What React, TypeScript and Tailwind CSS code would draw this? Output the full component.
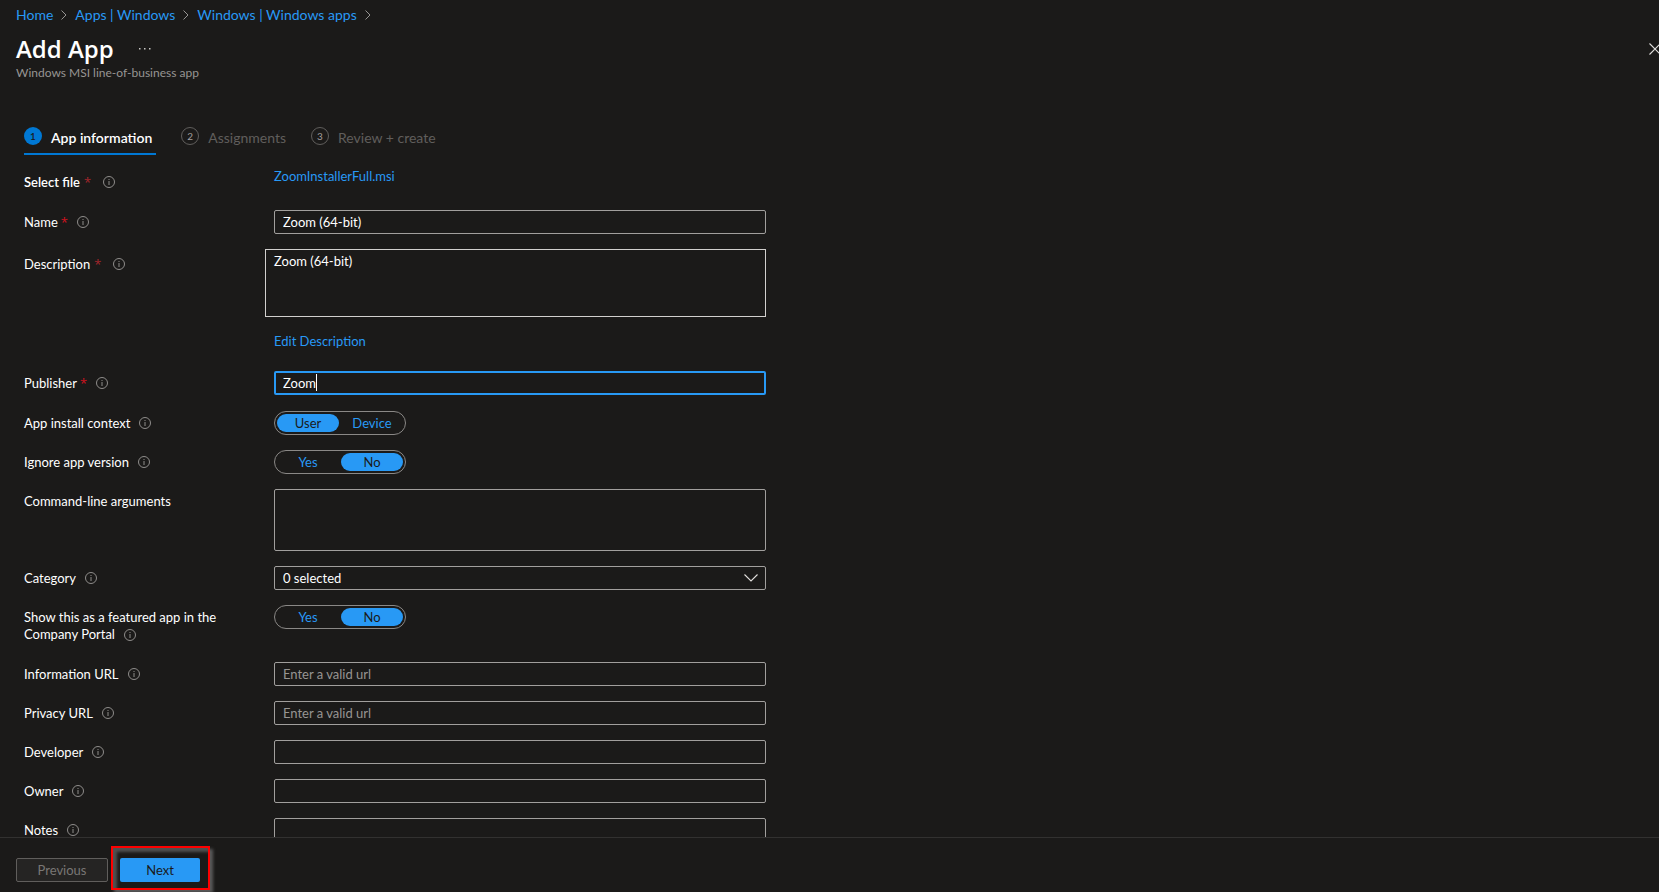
import React from "react";

const inputClass =
  "block h-6 w-full rounded-[2px] border border-[#a19f9d] bg-transparent px-2 text-[13px] leading-[18px] text-white outline-none placeholder:text-[#979593]";

function InfoIcon() {
  return (
    <svg width="12" height="12" viewBox="0 0 12 12" fill="none" className="shrink-0" aria-hidden="true">
      <circle cx="6" cy="6" r="5.5" stroke="#8f8d8b" />
      <path d="M6 5v4M6 3v1" stroke="#8f8d8b" strokeWidth="1" />
    </svg>
  );
}

function Chevron() {
  return (
    <svg width="6" height="10" viewBox="0 0 6 10" fill="none" aria-hidden="true">
      <path d="M0.5 0.5L5 5L0.5 9.5" stroke="#979593" />
    </svg>
  );
}

type RowProps = {
  label: string;
  htmlFor?: string;
  required?: boolean;
  info?: boolean;
  children: React.ReactNode;
};

function Row({ label, htmlFor, required, info = true, children }: RowProps) {
  return (
    <div className="flex items-start">
      <div className="flex min-h-6 w-[250px] shrink-0 items-center">
        <label htmlFor={htmlFor}>{label}</label>
        {required && <span className="ml-[3px] font-['Open_Sans',sans-serif] text-[#d0121f]">*</span>}
        {info && (
          <span className="ml-[9px]">
            <InfoIcon />
          </span>
        )}
      </div>
      <div className="w-full max-w-[492px]">{children}</div>
    </div>
  );
}

function Toggle({ name, options, selected }: { name: string; options: string[]; selected: string }) {
  return (
    <div role="radiogroup" aria-label={name} className="inline-flex h-6 gap-[2px] rounded-full border border-[#8a8886] p-[2px] align-top">
      {options.map((o) => (
        <label
          key={o}
          className="relative flex w-[62px] cursor-pointer items-center justify-center rounded-full text-[13px] leading-[18px] text-[#2899f5] has-checked:bg-[#2899f5] has-checked:text-[#1b1a19]"
        >
          <input type="radio" name={name} defaultChecked={o === selected} className="sr-only" />
          {o}
        </label>
      ))}
    </div>
  );
}

export default function App() {
  return (
    <div className="flex h-screen flex-col overflow-hidden bg-[#1b1a19] font-['Lato','Open_Sans',sans-serif] text-[13px] leading-[18px] text-white">
      <header className="px-4">
        <nav aria-label="Breadcrumb" className="flex h-[30px] items-center gap-2 text-sm text-[#2899f5]">
          <a href="#home">Home</a>
          <Chevron />
          <a href="#apps">Apps | Windows</a>
          <Chevron />
          <a href="#windows">Windows | Windows apps</a>
          <Chevron />
        </nav>
        <div className="flex h-[37px] items-center">
          <h1 className="font-['Open_Sans',sans-serif] text-2xl font-semibold">Add App</h1>
          <button type="button" aria-label="More actions" className="ml-6">
            <svg width="14" height="4" viewBox="0 0 14 4" fill="#c8c6c4" aria-hidden="true">
              <path d="M1 1h1.5v1.5H1zM6 1h1.5v1.5H6zM11 1h1.5v1.5H11z" />
            </svg>
          </button>
          <button type="button" aria-label="Close" className="-mr-4 ml-auto overflow-hidden">
            <svg width="10" height="12" viewBox="0 0 10 12" fill="none" aria-hidden="true">
              <path d="M0.5 0.5L11.5 11.5M0.5 11.5L11.5 0.5" stroke="#e1dfdd" strokeWidth="1.1" />
            </svg>
          </button>
        </div>
        <p className="text-xs leading-3 text-[#979593]">Windows MSI line-of-business app</p>
      </header>

      <main className="min-h-0 flex-1 overflow-y-auto px-6 pt-12 [scrollbar-width:none]">
        <div role="tablist" className="flex gap-[25px] text-sm leading-[18px]">
          <button type="button" role="tab" aria-selected="true" className="flex h-7 items-start gap-[9px] border-b-2 border-[#0078d4] pr-1 font-semibold">
            <span className="flex size-[18px] items-center justify-center rounded-full bg-[#0078d4] text-[10px] text-[#1b1a19]">1</span>
            <span className="pt-[2px]">App information</span>
          </button>
          <button type="button" role="tab" aria-selected="false" className="flex h-7 items-start gap-[9px] text-[#605e5c]">
            <span className="flex size-[18px] items-center justify-center rounded-full border border-[#605e5c] text-[10px] text-[#a19f9d]">2</span>
            <span className="pt-[2px]">Assignments</span>
          </button>
          <button type="button" role="tab" aria-selected="false" className="flex h-7 items-start gap-[9px] text-[#605e5c]">
            <span className="flex size-[18px] items-center justify-center rounded-full border border-[#605e5c] text-[10px] text-[#a19f9d]">3</span>
            <span className="pt-[2px]">Review + create</span>
          </button>
        </div>

        <form className="mt-[13px] flex flex-col gap-[15px]">
          <div className="flex h-[27px] items-start">
            <div className="flex h-7 w-[250px] shrink-0 items-center">
              <span className="font-semibold">Select file</span>
              <span className="ml-1 font-['Open_Sans',sans-serif] text-[#a4262c]">*</span>
              <span className="ml-3">
                <InfoIcon />
              </span>
            </div>
            <a href="#file" className="leading-4 text-[#2899f5]">ZoomInstallerFull.msi</a>
          </div>
          <Row label="Name" htmlFor="name" required>
            <input id="name" defaultValue="Zoom (64-bit)" className={inputClass} />
          </Row>
          <div className="flex items-start">
            <div className="flex h-[30px] w-[241px] shrink-0 items-center">
              <label htmlFor="description">Description</label>
              <span className="ml-1 font-['Open_Sans',sans-serif] text-[#a4262c]">*</span>
              <span className="ml-3">
                <InfoIcon />
              </span>
            </div>
            <div className="w-full max-w-[501px] pb-[6px]">
              <textarea
                id="description"
                defaultValue="Zoom (64-bit)"
                className="block h-[68px] w-full resize-none border border-[#d2d0ce] bg-transparent px-2 py-[2px] outline-none"
              />
              <a href="#edit" className="mt-[15px] ml-[9px] inline-block align-top text-[#2899f5]">Edit Description</a>
            </div>
          </div>
          <Row label="Publisher" htmlFor="publisher" required>
            <div className="relative mb-px">
              <input
                id="publisher"
                defaultValue="Zoom"
                className="block h-6 w-full rounded-[2px] border-2 border-[#2899f5] bg-transparent px-[7px] outline-none"
              />
              <span className="absolute top-[3px] left-[42px] h-[17px] w-px bg-white" />
            </div>
          </Row>
          <Row label="App install context">
            <Toggle name="App install context" options={["User", "Device"]} selected="User" />
          </Row>
          <Row label="Ignore app version">
            <Toggle name="Ignore app version" options={["Yes", "No"]} selected="No" />
          </Row>
          <Row label="Command-line arguments" htmlFor="arguments" info={false}>
            <textarea id="arguments" className="block h-[62px] w-full resize-none rounded-[2px] border border-[#a19f9d] bg-transparent px-2 py-[2px] outline-none" />
          </Row>
          <Row label="Category" htmlFor="category">
            <div className="relative">
              <select id="category" className={`${inputClass} appearance-none`}>
                <option>0 selected</option>
              </select>
              <svg width="14" height="8" viewBox="0 0 14 8" fill="none" className="pointer-events-none absolute top-2 right-2" aria-hidden="true">
                <path d="M0.5 0.5L7 7L13.5 0.5" stroke="#e1dfdd" strokeWidth="1.1" />
              </svg>
            </div>
          </Row>
          <div className="flex min-h-[42px] items-start">
            <div className="w-[250px] shrink-0 pt-1 pr-8 leading-[17px]">
              Show this as a featured app in the Company Portal
              <span className="ml-[9px] inline-block align-[-2px]">
                <InfoIcon />
              </span>
            </div>
            <Toggle name="Show this as a featured app in the Company Portal" options={["Yes", "No"]} selected="No" />
          </div>
          <Row label="Information URL" htmlFor="info-url">
            <input id="info-url" placeholder="Enter a valid url" className={inputClass} />
          </Row>
          <Row label="Privacy URL" htmlFor="privacy-url">
            <input id="privacy-url" placeholder="Enter a valid url" className={inputClass} />
          </Row>
          <Row label="Developer" htmlFor="developer">
            <input id="developer" className={inputClass} />
          </Row>
          <Row label="Owner" htmlFor="owner">
            <input id="owner" className={inputClass} />
          </Row>
          <Row label="Notes" htmlFor="notes">
            <textarea id="notes" className="block h-[62px] w-full resize-none rounded-[2px] border border-[#a19f9d] bg-transparent px-2 py-[2px] outline-none" />
          </Row>
        </form>
      </main>

      <footer className="flex h-[55px] shrink-0 items-start gap-3 border-t border-[#323130] px-4 pt-5">
        <button type="button" disabled className="h-6 w-[92px] rounded-[2px] border border-[#605e5c] bg-[#252423] text-[#797775]">
          Previous
        </button>
        <div className="relative">
          <span className="pointer-events-none absolute -top-3 -left-[9px] h-11 w-[99px] border-2 border-[#ff0000] shadow-[3px_3px_3px_#5a5a5a,inset_4px_4px_3px_#505050]" />
          <button type="button" className="relative block h-6 w-20 rounded-[2px] bg-[#2899f5] text-[#1b1a19]">
            Next
          </button>
        </div>
      </footer>
    </div>
  );
}
